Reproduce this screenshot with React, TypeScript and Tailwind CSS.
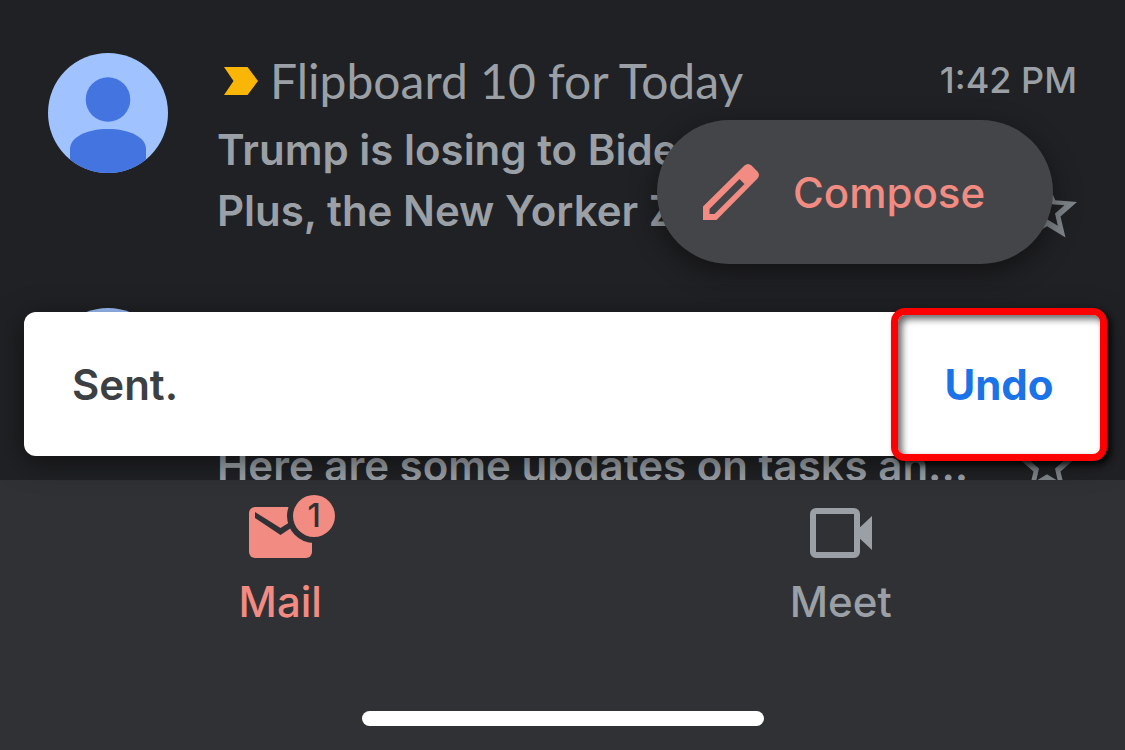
import type { ReactNode } from "react";

const Avatar = () => (
  <svg className="size-[120px] shrink-0 rounded-full" viewBox="0 0 120 120" aria-hidden="true">
    <rect width="120" height="120" fill="#a0c3ff" />
    <circle cx="60" cy="46.500" r="22.300" fill="#4474e0" />
    <path d="M22 96C22 84 39 76 60 76s38 8 38 20v24H22z" fill="#4474e0" />
  </svg>
);

const Star = () => (
  <svg className="h-[58px] w-[60px]" viewBox="0 0 60 58" aria-hidden="true">
    <path
      fillRule="evenodd"
      d="M30 1L38.300 20.200 60 22.100 43.500 36.400 48.500 57.500 30 46.300 11.500 57.500 16.500 36.400 0 22.100 21.700 20.200zM30 12.500L25 24.200 12.500 25.300 22 33.500 19.200 45.800 30 39.300 40.800 45.800 38 33.500 47.500 25.300 35 24.200z"
      fill="#80868b"
    />
  </svg>
);

const ImportantMarker = () => (
  <svg className="h-7 w-[34px]" viewBox="0 0 34 28" aria-hidden="true">
    <path d="M0 0h23.500L34 14 23.500 28H0l9.500-14z" fill="#f9b606" />
  </svg>
);

const Pencil = () => (
  <svg className="size-14" viewBox="0 0 56 56" aria-hidden="true">
    <path
      fillRule="evenodd"
      d="M0 42.500L41.500 1.500Q45 -1.500 48.500 1.500L54.500 7.500Q57.500 11 54.500 14.500L13.500 56H0zM6.500 45V50H11.500L41.500 20 36.500 15z"
      fill="#f28b82"
    />
  </svg>
);

const MailIcon = () => (
  <svg className="h-[64px] w-[88px]" viewBox="0 0 88 64" aria-hidden="true">
    <rect x="1" y="13" width="63" height="51" rx="6" fill="#f28b82" />
    <path d="M7 18v6L32.500 41 58 24v-6L32.500 34z" fill="#303134" />
    <circle cx="66" cy="22" r="27" fill="#303134" />
    <circle cx="66" cy="22" r="21" fill="#f28b82" />
  </svg>
);

const MeetIcon = () => (
  <svg className="h-[50px] w-[62px]" viewBox="0 0 62 50" aria-hidden="true">
    <rect x="3" y="3" width="44" height="44" rx="3" fill="none" stroke="#9aa0a6" strokeWidth="6" />
    <path d="M46 23L62 8v34L46 27z" fill="#9aa0a6" />
  </svg>
);

const MailRow = ({ children }: { children: ReactNode }) => (
  <article className="flex h-[255px] gap-[49px] pr-12 pl-12">
    <Avatar />
    <div className="flex h-[188px] min-w-0 flex-1 flex-col justify-end text-[42px] leading-[61px] font-semibold whitespace-nowrap">
      {children}
    </div>
  </article>
);

const StarButton = () => (
  <button aria-label="Star" className="-mt-1 shrink-0">
    <Star />
  </button>
);

export default function App() {
  return (
    <div className="flex h-screen flex-col bg-[#202124] font-['Inter','Liberation_Sans',sans-serif] text-[#9aa0a6]">
      <main className="relative z-10 min-h-0 flex-1">
        <section className="h-full overflow-hidden pt-[53px]">
          <MailRow>
            <header className="flex h-[66px] items-start justify-between pl-[7px]">
              <h2 className="flex items-center gap-3 font-['Lato','Liberation_Sans',sans-serif] text-[48px] leading-[56px] font-normal">
                <ImportantMarker />
                Flipboard 10 for Today
              </h2>
              <time className="text-[36px] leading-[54px] font-medium">1:42 PM</time>
            </header>
            <p>Trump is losing to Bide</p>
            <div className="flex items-center justify-between">
              <p>Plus, the New Yorker Z</p>
              <StarButton />
            </div>
          </MailRow>
          <MailRow>
            <div className="flex items-center justify-between">
              <p>Here are some updates on tasks an...</p>
              <StarButton />
            </div>
          </MailRow>
        </section>

        <button className="absolute top-[120px] right-[72px] flex h-36 w-[396px] items-center gap-[34px] rounded-full bg-[#444548] pl-[46px] text-[42px] font-medium text-[#f28b82] shadow-[0_8px_28px_rgba(0,0,0,0.45)]">
          <Pencil />
          Compose
        </button>

        <div
          role="status"
          className="absolute inset-x-6 bottom-6 flex h-36 items-center justify-between rounded-xl bg-white pl-12 text-[42px] font-semibold text-[#3c4043] shadow-[0_6px_28px_rgba(0,0,0,0.5)]"
        >
          Sent.
          <button className="-mr-[6px] h-[153px] w-[216px] rounded-[14px] border-[7px] border-[#ff0000] bg-white font-bold text-[#1a73e8] shadow-[4px_4px_6px_rgba(0,0,0,0.8),inset_4px_4px_7px_rgba(0,0,0,0.6)]">
            Undo
          </button>
        </div>
      </main>

      <nav className="flex flex-col bg-[#303134] pt-[14px] pb-6 text-[42px] leading-[52px] font-medium">
        <div className="flex pr-1">
          <button className="flex flex-1 flex-col items-center gap-[18px] text-[#f28b82]">
            <span className="relative ml-6 block">
              <MailIcon />
              <span className="absolute top-0 right-0 flex size-11 items-center justify-center text-[32px] text-[#303134]">
                1
              </span>
            </span>
            Mail
          </button>
          <button className="flex flex-1 flex-col items-center gap-[18px] pt-[14px]">
            <MeetIcon />
            Meet
          </button>
        </div>
        <div className="mx-auto mt-[83px] h-[15px] w-[402px] rounded-full bg-white" />
      </nav>
    </div>
  );
}
